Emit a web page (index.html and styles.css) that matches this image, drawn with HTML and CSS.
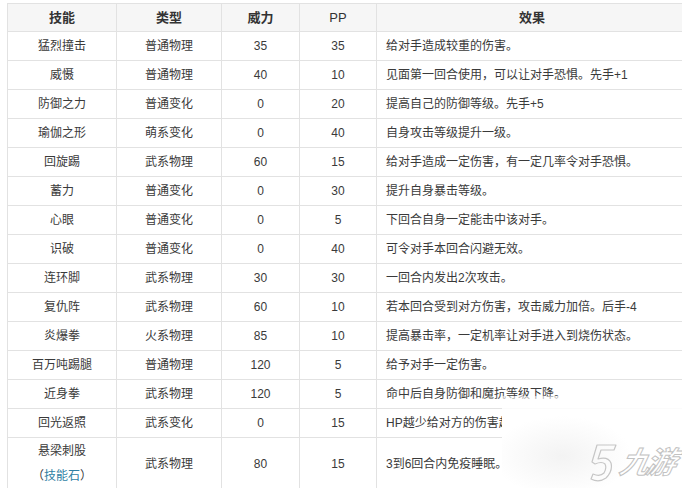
FILE: index.html
```html
<!DOCTYPE html>
<html lang="zh">
<head>
<meta charset="utf-8">
<link rel="stylesheet" href="styles.css">
</head>
<body>
<div class="wrap">
<table class="skills">
  <colgroup>
    <col class="c1"><col class="c2"><col class="c3"><col class="c4"><col class="c5">
  </colgroup>
  <thead>
    <tr><th>技能</th><th>类型</th><th>威力</th><th class="pp">PP</th><th>效果</th></tr>
  </thead>
  <tbody>
    <tr><td>猛烈撞击</td><td>普通物理</td><td>35</td><td>35</td><td class="eff">给对手造成较重的伤害。</td></tr>
    <tr><td>威慑</td><td>普通物理</td><td>40</td><td>10</td><td class="eff">见面第一回合使用，可以让对手恐惧。先手+1</td></tr>
    <tr><td>防御之力</td><td>普通变化</td><td>0</td><td>20</td><td class="eff">提高自己的防御等级。先手+5</td></tr>
    <tr><td>瑜伽之形</td><td>萌系变化</td><td>0</td><td>40</td><td class="eff">自身攻击等级提升一级。</td></tr>
    <tr><td>回旋踢</td><td>武系物理</td><td>60</td><td>15</td><td class="eff">给对手造成一定伤害，有一定几率令对手恐惧。</td></tr>
    <tr><td>蓄力</td><td>普通变化</td><td>0</td><td>30</td><td class="eff">提升自身暴击等级。</td></tr>
    <tr><td>心眼</td><td>普通变化</td><td>0</td><td>5</td><td class="eff">下回合自身一定能击中该对手。</td></tr>
    <tr><td>识破</td><td>普通变化</td><td>0</td><td>40</td><td class="eff">可令对手本回合闪避无效。</td></tr>
    <tr><td>连环脚</td><td>武系物理</td><td>30</td><td>30</td><td class="eff">一回合内发出2次攻击。</td></tr>
    <tr><td>复仇阵</td><td>武系物理</td><td>60</td><td>10</td><td class="eff">若本回合受到对方伤害，攻击威力加倍。后手-4</td></tr>
    <tr><td>炎爆拳</td><td>火系物理</td><td>85</td><td>10</td><td class="eff">提高暴击率，一定机率让对手进入到烧伤状态。</td></tr>
    <tr><td>百万吨踢腿</td><td>普通物理</td><td>120</td><td>5</td><td class="eff">给予对手一定伤害。</td></tr>
    <tr><td>近身拳</td><td>武系物理</td><td>120</td><td>5</td><td class="eff">命中后自身防御和魔抗等级下降。</td></tr>
    <tr><td>回光返照</td><td>武系变化</td><td>0</td><td>15</td><td class="eff">HP越少给对方的伤害越大。</td></tr>
    <tr class="tall"><td>悬梁刺股<br>（<a class="link" href="#">技能石</a>）</td><td>武系物理</td><td>80</td><td>15</td><td class="eff">3到6回合内免疫睡眠。</td></tr>
  </tbody>
</table>
<div class="mark">
  <svg class="logo" width="30" height="40" viewBox="0 0 30 40">
    <path d="M9 2 L28 2 L26 7 L13 7 L10 16 Q20 13 23 20 Q25 28 18 35 Q11 40 3 36 L5 31 Q12 34 16 30 Q19 25 17 21 Q14 18 7 21 L4 19 Z" fill="none" stroke="#c6c6c6" stroke-width="1.2" stroke-linejoin="round"/>
  </svg>
  <span class="brand">九游</span>
</div>
</div>
</body>
</html>
```
FILE: styles.css
```css
html, body {
  margin: 0;
  padding: 0;
  background: #fff;
}
.wrap {
  position: relative;
  width: 682px;
  height: 488px;
  overflow: hidden;
  padding: 3px 0 0 7px;
  box-sizing: border-box;
}
.skills {
  border-collapse: collapse;
  table-layout: fixed;
  width: 680px;
  font-family: "Liberation Sans", "Noto Sans CJK SC", sans-serif;
  font-size: 12px;
  color: #3a3a3a;
}
.c1 { width: 109px; }
.c2 { width: 105px; }
.c3 { width: 78px; }
.c4 { width: 77px; }
.c5 { width: 311px; }
.skills th, .skills td {
  border: 1px solid #e2e2e2;
  padding: 0;
  text-align: center;
  vertical-align: middle;
  line-height: 16px;
}
.skills th {
  background: #f6f6f6;
  font-weight: bold;
  font-size: 13px;
  color: #333;
  height: 27px;
}
.skills th.pp { font-weight: normal; }
.skills td { height: 28px; }
.skills td.eff {
  text-align: left;
  padding-left: 9px;
}
.skills tr.tall td {
  height: 52px;
  line-height: 25px;
}
.link {
  color: #2f7fa4;
  text-decoration: none;
}
.mark {
  position: absolute;
  left: 502px;
  top: 396px;
  right: 0;
  bottom: 0;
  background:
    radial-gradient(ellipse 70px 40px at 60px 60px, rgba(238,238,238,0.7), rgba(255,255,255,0)),
    linear-gradient(to bottom, rgba(255,255,255,0.55) 0, #fff 18px);
}
.logo {
  position: absolute;
  left: 86px;
  top: 47px;
}
.brand {
  position: absolute;
  left: 119px;
  top: 44px;
  font-family: "Noto Sans CJK SC", sans-serif;
  font-size: 30px;
  font-style: italic;
  font-weight: bold;
  color: transparent;
  -webkit-text-stroke: 1px #c2c2c2;
  transform: skewX(-12deg);
  line-height: 40px;
  letter-spacing: -4px;
  white-space: nowrap;
}
```
